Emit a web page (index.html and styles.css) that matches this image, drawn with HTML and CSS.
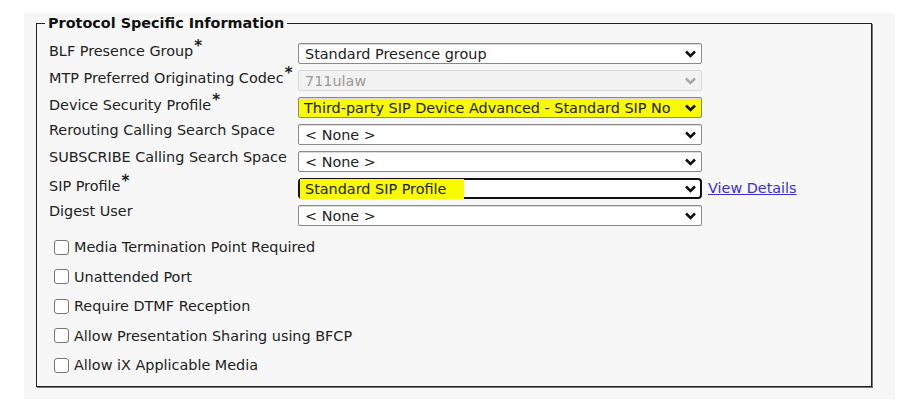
FILE: index.html
```html
<!DOCTYPE html>
<html lang="en">

<head>
    <meta charset="UTF-8" />
    <title>Protocol Specific Information</title>
    <link rel="stylesheet" href="styles.css">
</head>

<body>
    <div class="panel">
        <fieldset class="group">
            <legend>Protocol Specific Information</legend>

            <div class="rows">
                <label>BLF Presence Group<span class="req">*</span></label>
                <div class="select">
                    <span>Standard Presence group</span>
                    <svg class="chev" viewBox="0 0 12 8"><polyline points="1.5,1.5 6,6 10.5,1.5" /></svg>
                </div>
                <span></span>

                <label>MTP Preferred Originating Codec<span class="req">*</span></label>
                <div class="select disabled">
                    <span>711ulaw</span>
                    <svg class="chev" viewBox="0 0 12 8"><polyline points="1.5,1.5 6,6 10.5,1.5" /></svg>
                </div>
                <span></span>

                <label>Device Security Profile<span class="req">*</span></label>
                <div class="select marked">
                    <span>Third-party SIP Device Advanced - Standard SIP No</span>
                    <svg class="chev" viewBox="0 0 12 8"><polyline points="1.5,1.5 6,6 10.5,1.5" /></svg>
                </div>
                <span></span>

                <label>Rerouting Calling Search Space</label>
                <div class="select">
                    <span>&lt; None &gt;</span>
                    <svg class="chev" viewBox="0 0 12 8"><polyline points="1.5,1.5 6,6 10.5,1.5" /></svg>
                </div>
                <span></span>

                <label>SUBSCRIBE Calling Search Space</label>
                <div class="select">
                    <span>&lt; None &gt;</span>
                    <svg class="chev" viewBox="0 0 12 8"><polyline points="1.5,1.5 6,6 10.5,1.5" /></svg>
                </div>
                <span></span>

                <label>SIP Profile<span class="req">*</span></label>
                <div class="select focused">
                    <span class="hl">Standard SIP Profile</span>
                    <svg class="chev" viewBox="0 0 12 8"><polyline points="1.5,1.5 6,6 10.5,1.5" /></svg>
                </div>
                <a href="#" class="details">View Details</a>

                <label>Digest User</label>
                <div class="select">
                    <span>&lt; None &gt;</span>
                    <svg class="chev" viewBox="0 0 12 8"><polyline points="1.5,1.5 6,6 10.5,1.5" /></svg>
                </div>
                <span></span>
            </div>

            <div class="checks">
                <div class="check"><span class="box"></span>Media Termination Point Required</div>
                <div class="check"><span class="box"></span>Unattended Port</div>
                <div class="check"><span class="box"></span>Require DTMF Reception</div>
                <div class="check"><span class="box"></span>Allow Presentation Sharing using BFCP</div>
                <div class="check"><span class="box"></span>Allow iX Applicable Media</div>
            </div>
        </fieldset>
    </div>
</body>

</html>
```

FILE: styles.css
```css
body {
    margin: 0;
    background: #fff;
    font-family: "DejaVu Sans", Verdana, sans-serif;
    font-size: 14.4px;
    color: #222;
}

.panel {
    width: 836px;
    margin: 13px 0 0 24px;
    padding: 2px 23px 12px 12px;
    background: #f7f7f7;
}

.group {
    margin: 0;
    padding: 11px 12px 13px 12px;
    border: 1px solid #222;
    box-shadow: 1px 1px 0 #777;
}

.group legend {
    margin-left: -4px;
    padding: 0 3px;
    font-weight: bold;
    font-size: 14.4px;
    line-height: 17px;
    color: #111;
}

.rows {
    display: grid;
    grid-template-columns: 249px 404px auto;
    row-gap: 6px;
    align-items: start;
}

.rows label {
    margin-top: -2px;
    line-height: 16px;
    white-space: nowrap;
}

.req {
    font-weight: bold;
    font-size: 15px;
    line-height: 10px;
    vertical-align: 5px;
    margin-left: 1px;
}

.select {
    box-sizing: border-box;
    height: 21px;
    display: flex;
    align-items: center;
    justify-content: space-between;
    padding: 0 4px 0 6px;
    background: #fff;
    border: 1px solid #8a8a8a;
    border-radius: 2px;
    box-shadow: inset 0 1px 0 #ddd;
}

.select span {
    white-space: nowrap;
    overflow: hidden;
}

.chev {
    width: 13px;
    height: 8px;
    flex: none;
}

.chev polyline {
    fill: none;
    stroke: #111;
    stroke-width: 2.6;
}

.disabled {
    background: #f2f2f2;
    border-color: #d8d8d8;
    color: #999;
    box-shadow: none;
}

.disabled .chev polyline {
    stroke: #aaa;
}

.marked {
    background: #fafa00;
    padding-left: 5px;
}

.focused {
    border: 2px solid #111;
    border-radius: 4px;
    padding-left: 0;
    padding-right: 3px;
    box-shadow: none;
}

.hl {
    background: #fafa00;
    padding: 2px 18px 2px 5px;
}

.details {
    margin-left: 6px;
    line-height: 21px;
    color: #3a2fd6;
    text-decoration: underline;
}

.checks {
    margin-top: 13px;
    padding-left: 5px;
    display: flex;
    flex-direction: column;
    gap: 13.5px;
}

.check {
    display: flex;
    align-items: center;
    line-height: 16px;
}

.box {
    box-sizing: border-box;
    width: 15px;
    height: 15px;
    margin-right: 5px;
    background: #fff;
    border: 1px solid #777;
    border-radius: 3px;
}
```
